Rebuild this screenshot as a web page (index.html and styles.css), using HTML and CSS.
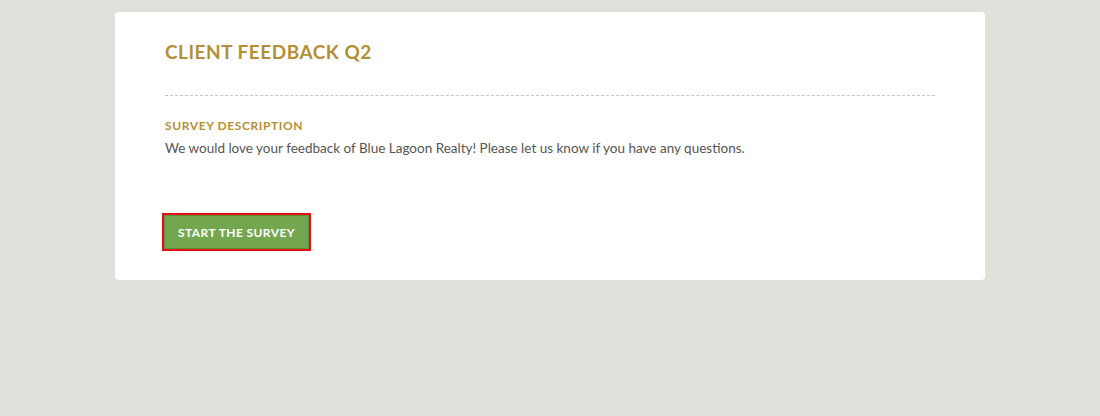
FILE: index.html
```html
<!DOCTYPE html>
<html lang="en">
<head>
<meta charset="utf-8">
<title>Client Feedback Q2</title>
<link rel="stylesheet" href="styles.css">
</head>
<body>
<main class="card">
  <h1 class="title">CLIENT FEEDBACK Q2</h1>
  <hr class="divider">
  <section class="desc">
    <h2 class="desc-label">SURVEY DESCRIPTION</h2>
    <p class="desc-text">We would love your feedback of Blue Lagoon Realty! Please let us know if you have any questions.</p>
  </section>
  <div class="actions">
    <button class="start-btn" type="button">START THE SURVEY</button>
  </div>
</main>
</body>
</html>
```
FILE: styles.css
```css
html, body {
  margin: 0;
  padding: 0;
  background: #e1e1db;
  font-family: "Lato", "Open Sans", sans-serif;
}
.card {
  width: 770px;
  margin: 12px 0 0 115px;
  background: #ffffff;
  border-radius: 4px;
  padding: 26px 50px 29px;
}
.title {
  margin: 0;
  font-size: 19px;
  line-height: 28px;
  font-weight: 700;
  letter-spacing: 0.5px;
  color: #b38f35;
}
.divider {
  margin: 29px 0 0;
  border: 0;
  border-top: 1px dashed #c4c4c4;
  height: 0;
}
.desc {
  margin-top: 21px;
}
.desc-label {
  margin: 0;
  font-size: 12px;
  line-height: 18px;
  font-weight: 700;
  letter-spacing: 0.6px;
  color: #b38f35;
}
.desc-text {
  margin: 3px 0 0;
  font-size: 13.5px;
  line-height: 20px;
  color: #555555;
}
.actions {
  margin-top: 55px;
  display: flex;
}
.start-btn {
  margin-left: -3px;
  width: 149px;
  height: 38px;
  background: #73a74f;
  border: 2px solid #e60f14;
  color: #ffffff;
  font-family: "Lato", "Open Sans", sans-serif;
  font-size: 12px;
  font-weight: 700;
  letter-spacing: 0.4px;
  padding: 0;
  cursor: pointer;
  box-shadow: inset 0 0 0 1px #5f8f40;
}
```
